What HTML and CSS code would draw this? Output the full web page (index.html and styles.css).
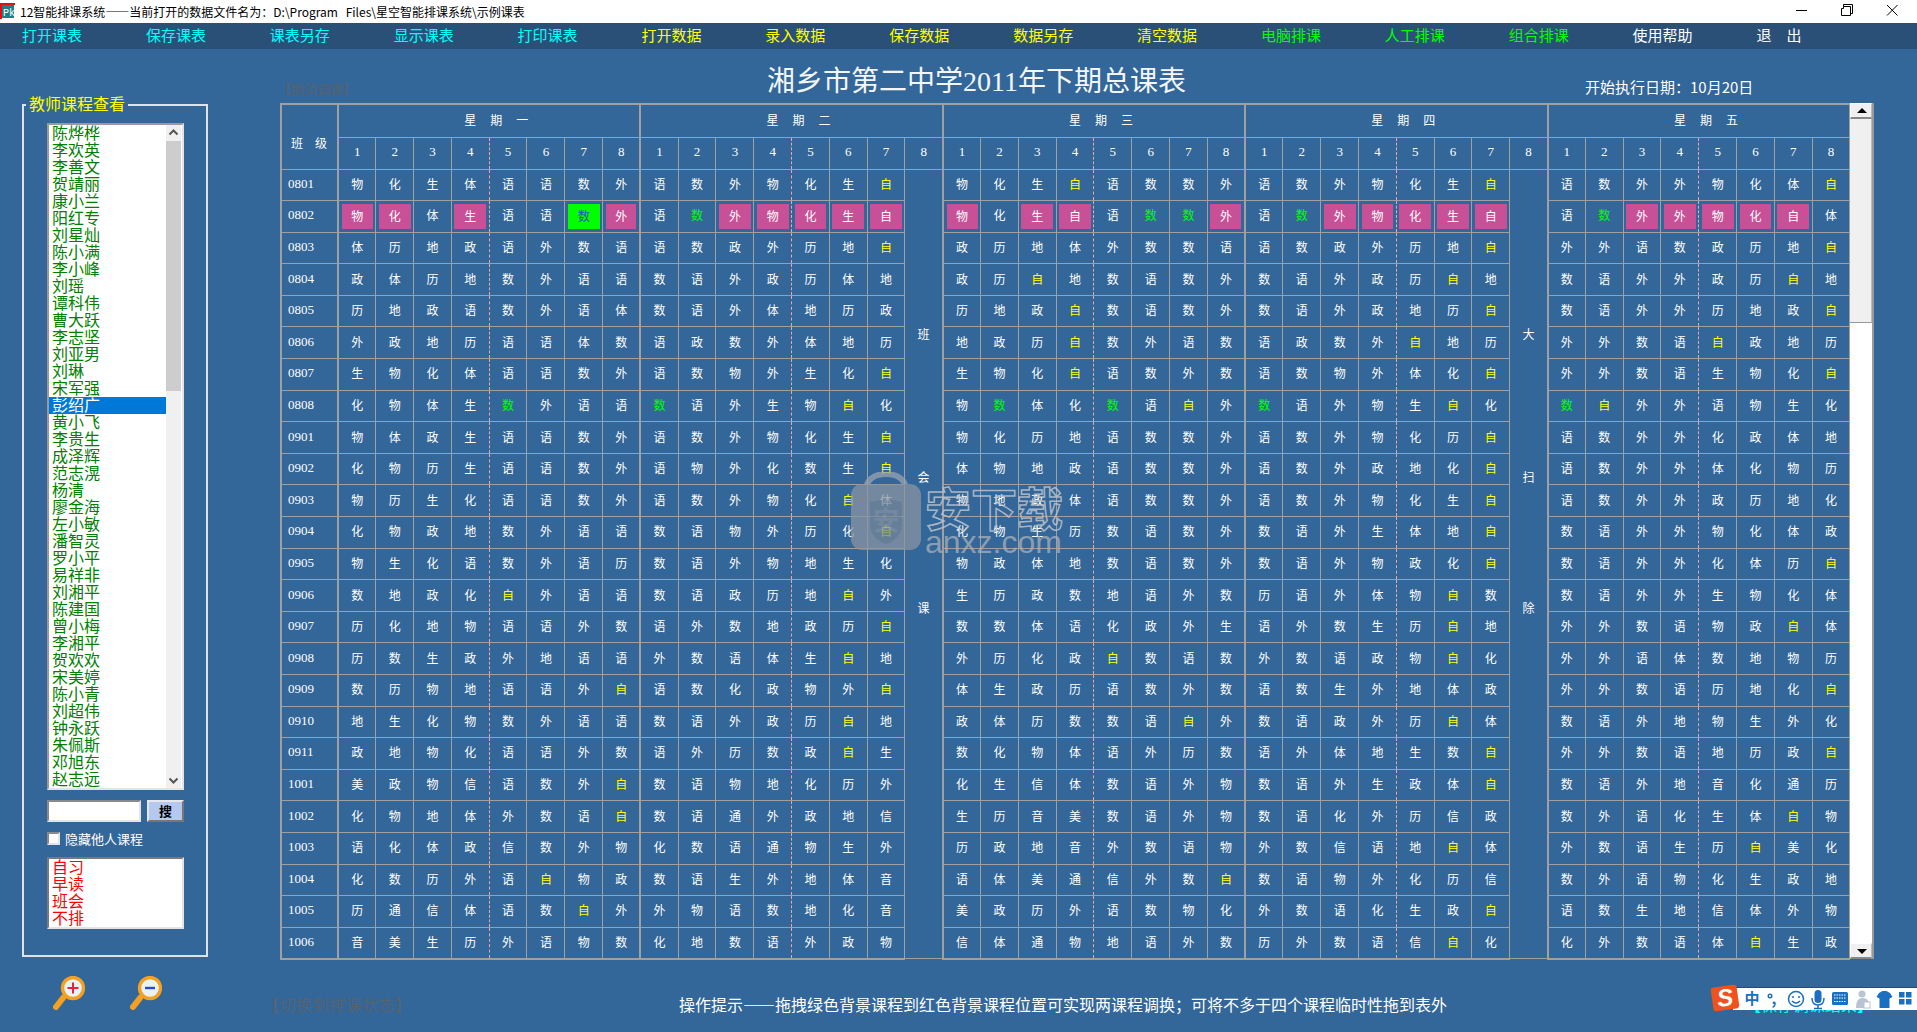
FILE: index.html
```html
<!DOCTYPE html>
<html lang="zh-CN">
<head>
<meta charset="utf-8">
<title>智能排课系统</title>
<link rel="stylesheet" href="styles.css">
</head>
<body>
<div class="app">
  <header class="titlebar">
    <svg class="appicon" viewBox="0 0 15 16" width="15" height="16"><rect x="1" y="1" width="13" height="14" fill="#1f7f86"/><path d="M0 0h15v2H2v14H0z" fill="#e01010"/><text x="3" y="13" class="appicon-text">Pk</text></svg>
    <span class="titletext">12智能排课系统——当前打开的数据文件名为：D:\Program Files\星空智能排课系统\示例课表</span>
    <div class="winbtns">
      <svg viewBox="0 0 120 12" width="120" height="12"><path d="M0 6.5h11" stroke="#000" fill="none"/><path d="M47.5 2.5h7v9h-9v-7h2zM47.5 2.5V.5h9v9h-2" stroke="#000" fill="none"/><path d="M91 1l10.5 10.5M101.5 1L91 11.5" stroke="#000" fill="none"/></svg>
    </div>
  </header>
  <nav class="menubar">
    <span class="mi cyan">打开课表</span><span class="mi cyan">保存课表</span><span class="mi cyan">课表另存</span><span class="mi cyan">显示课表</span><span class="mi cyan">打印课表</span>
    <span class="mi yellow">打开数据</span><span class="mi yellow">录入数据</span><span class="mi yellow">保存数据</span><span class="mi yellow">数据另存</span><span class="mi yellow">清空数据</span>
    <span class="mi lime">电脑排课</span><span class="mi lime">人工排课</span><span class="mi lime">组合排课</span>
    <span class="mi white">使用帮助</span><span class="mi white">退&emsp;出</span>
  </nav>
  <main class="main">
    <aside class="side">
      <section class="group">
        <div class="legend">教师课程查看</div>
        <div class="teachers">
          <ul class="tlist">
            <li>陈烨桦</li><li>李欢英</li><li>李善文</li><li>贺靖丽</li><li>康小兰</li><li>阳红专</li><li>刘星灿</li><li>陈小满</li><li>李小峰</li><li>刘瑶</li><li>谭科伟</li><li>曹大跃</li><li>李志坚</li><li>刘亚男</li><li>刘琳</li><li>宋军强</li><li class="sel">彭绍广</li><li>黄小飞</li><li>李贵生</li><li>成泽辉</li><li>范志滉</li><li>杨清</li><li>廖金海</li><li>左小敏</li><li>潘智灵</li><li>罗小平</li><li>易祥非</li><li>刘湘平</li><li>陈建国</li><li>曾小梅</li><li>李湘平</li><li>贺欢欢</li><li>宋美婷</li><li>陈小青</li><li>刘超伟</li><li>钟永跃</li><li>朱佩斯</li><li>邓旭东</li><li>赵志远</li>
          </ul>
          <div class="lscroll">
            <div class="lbtn"><svg viewBox="0 0 15 16" width="15" height="16"><path d="M3.5 9.5l4-4 4 4" fill="none" stroke="#555" stroke-width="2"/></svg></div>
            <div class="lthumb"></div>
            <div class="ltrack"></div>
            <div class="lbtn"><svg viewBox="0 0 15 16" width="15" height="16"><path d="M3.5 6.5l4 4 4-4" fill="none" stroke="#555" stroke-width="2"/></svg></div>
          </div>
        </div>
        <div class="searchrow"><input class="searchbox" type="text"><button class="searchbtn" type="button">搜</button></div>
        <label class="hiderow"><span class="check"></span><span>隐藏他人课程</span></label>
        <ul class="redlist"><li>自习</li><li>早读</li><li>班会</li><li>不排</li></ul>
      </section>
      <div class="zooms">
        <svg viewBox="0 0 32 34" width="32" height="34"><path d="M10 22L3 31" stroke="#f5a020" stroke-width="6" stroke-linecap="round"/><circle cx="20" cy="12" r="10.5" fill="#e6f3f2" stroke="#f5a020" stroke-width="3.4"/><path d="M20 6.5v11M14.5 12h11" stroke="#e8203a" stroke-width="2"/></svg>
        <svg viewBox="0 0 32 34" width="32" height="34"><path d="M10 22L3 31" stroke="#f5a020" stroke-width="6" stroke-linecap="round"/><circle cx="20" cy="12" r="10.5" fill="#e6f3f2" stroke="#f5a020" stroke-width="3.4"/><path d="M15 12h10" stroke="#3048d0" stroke-width="2.4"/></svg>
      </div>
    </aside>
    <div class="content">
      <div class="head">
        <span class="undo">【撤消调课】</span>
        <h1 class="title">湘乡市第二中学2011年下期总课表</h1>
        <span class="date">开始执行日期：10月20日</span>
      </div>
      <div class="tablewrap">
        <table class="tt">
          <colgroup>
            <col class="c0">
            <col class="c"><col class="c"><col class="c"><col class="c dash"><col class="c"><col class="c"><col class="c"><col class="c end">
            <col class="c"><col class="c"><col class="c"><col class="c dash"><col class="c"><col class="c"><col class="c"><col class="c end">
            <col class="c"><col class="c"><col class="c"><col class="c dash"><col class="c"><col class="c"><col class="c"><col class="c end">
            <col class="c"><col class="c"><col class="c"><col class="c dash"><col class="c"><col class="c"><col class="c"><col class="c end">
            <col class="c"><col class="c"><col class="c"><col class="c dash"><col class="c"><col class="c"><col class="c"><col class="c">
          </colgroup>
          <thead>
            <tr class="r-day"><th rowspan="2" class="banji">班级</th><th colspan="8" class="day">星期一</th><th colspan="8" class="day">星期二</th><th colspan="8" class="day">星期三</th><th colspan="8" class="day">星期四</th><th colspan="8" class="day">星期五</th></tr>
            <tr class="r-per"><td>1<td>2<td>3<td>4<td>5<td>6<td>7<td>8<td>1<td>2<td>3<td>4<td>5<td>6<td>7<td>8<td>1<td>2<td>3<td>4<td>5<td>6<td>7<td>8<td>1<td>2<td>3<td>4<td>5<td>6<td>7<td>8<td>1<td>2<td>3<td>4<td>5<td>6<td>7<td>8</tr>
          </thead>
          <tbody>
<tr><th>0801<td>物<td>化<td>生<td>体<td>语<td>语<td>数<td>外<td>语<td>数<td>外<td>物<td>化<td>生<td class="y">自<td rowspan="25" class="merged"><span class="m1">班</span><span class="m2">会</span><span class="m3">课</span><td>物<td>化<td>生<td class="y">自<td>语<td>数<td>数<td>外<td>语<td>数<td>外<td>物<td>化<td>生<td class="y">自<td rowspan="25" class="merged"><span class="m1">大</span><span class="m2">扫</span><span class="m3">除</span><td>语<td>数<td>外<td>外<td>物<td>化<td>体<td class="y">自</tr>
<tr><th>0802<td class="p">物<td class="p">化<td>体<td class="p">生<td>语<td>语<td class="gb">数<td class="p">外<td>语<td class="g">数<td class="p">外<td class="p">物<td class="p">化<td class="p">生<td class="p">自<td class="p">物<td>化<td class="p">生<td class="p">自<td>语<td class="g">数<td class="g">数<td class="p">外<td>语<td class="g">数<td class="p">外<td class="p">物<td class="p">化<td class="p">生<td class="p">自<td>语<td class="g">数<td class="p">外<td class="p">外<td class="p">物<td class="p">化<td class="p">自<td>体</tr>
<tr><th>0803<td>体<td>历<td>地<td>政<td>语<td>外<td>数<td>语<td>语<td>数<td>政<td>外<td>历<td>地<td class="y">自<td>政<td>历<td>地<td>体<td>外<td>数<td>数<td>语<td>语<td>数<td>政<td>外<td>历<td>地<td class="y">自<td>外<td>外<td>语<td>数<td>政<td>历<td>地<td class="y">自</tr>
<tr><th>0804<td>政<td>体<td>历<td>地<td>数<td>外<td>语<td>语<td>数<td>语<td>外<td>政<td>历<td>体<td>地<td>政<td>历<td class="y">自<td>地<td>数<td>语<td>数<td>外<td>数<td>语<td>外<td>政<td>历<td class="y">自<td>地<td>数<td>语<td>外<td>外<td>政<td>历<td class="y">自<td>地</tr>
<tr><th>0805<td>历<td>地<td>政<td>语<td>数<td>外<td>语<td>体<td>数<td>语<td>外<td>体<td>地<td>历<td>政<td>历<td>地<td>政<td class="y">自<td>数<td>语<td>数<td>外<td>数<td>语<td>外<td>政<td>地<td>历<td class="y">自<td>数<td>语<td>外<td>外<td>历<td>地<td>政<td class="y">自</tr>
<tr><th>0806<td>外<td>政<td>地<td>历<td>语<td>语<td>体<td>数<td>语<td>政<td>数<td>外<td>体<td>地<td>历<td>地<td>政<td>历<td class="y">自<td>数<td>外<td>语<td>数<td>语<td>政<td>数<td>外<td class="y">自<td>地<td>历<td>外<td>外<td>数<td>语<td class="y">自<td>政<td>地<td>历</tr>
<tr><th>0807<td>生<td>物<td>化<td>体<td>语<td>语<td>数<td>外<td>语<td>数<td>物<td>外<td>生<td>化<td class="y">自<td>生<td>物<td>化<td class="y">自<td>语<td>数<td>外<td>数<td>语<td>数<td>物<td>外<td>体<td>化<td class="y">自<td>外<td>外<td>数<td>语<td>生<td>物<td>化<td class="y">自</tr>
<tr><th>0808<td>化<td>物<td>体<td>生<td class="g">数<td>外<td>语<td>语<td class="g">数<td>语<td>外<td>生<td>物<td class="y">自<td>化<td>物<td class="g">数<td>体<td>化<td class="g">数<td>语<td class="y">自<td>外<td class="g">数<td>语<td>外<td>物<td>生<td class="y">自<td>化<td class="g">数<td class="y">自<td>外<td>外<td>语<td>物<td>生<td>化</tr>
<tr><th>0901<td>物<td>体<td>政<td>生<td>语<td>语<td>数<td>外<td>语<td>数<td>外<td>物<td>化<td>生<td class="y">自<td>物<td>化<td>历<td>地<td>语<td>数<td>数<td>外<td>语<td>数<td>外<td>物<td>化<td>历<td class="y">自<td>语<td>数<td>外<td>外<td>化<td>政<td>体<td>地</tr>
<tr><th>0902<td>化<td>物<td>历<td>生<td>语<td>语<td>数<td>外<td>语<td>物<td>外<td>化<td>数<td>生<td class="y">自<td>体<td>物<td>地<td>政<td>语<td>数<td>数<td>外<td>语<td>数<td>外<td>政<td>地<td>化<td class="y">自<td>语<td>数<td>外<td>外<td>体<td>化<td>物<td>历</tr>
<tr><th>0903<td>物<td>历<td>生<td>化<td>语<td>语<td>数<td>外<td>语<td>数<td>外<td>物<td>化<td class="y">自<td>体<td>物<td>地<td>政<td>体<td>语<td>数<td>数<td>外<td>语<td>数<td>外<td>物<td>化<td>生<td class="y">自<td>语<td>数<td>外<td>外<td>政<td>历<td>地<td>化</tr>
<tr><th>0904<td>化<td>物<td>政<td>地<td>数<td>外<td>语<td>语<td>数<td>语<td>物<td>外<td>历<td>化<td class="y">自<td>化<td>物<td>生<td>历<td>数<td>语<td>数<td>外<td>数<td>语<td>外<td>生<td>体<td>地<td class="y">自<td>数<td>语<td>外<td>外<td>物<td>化<td>体<td>政</tr>
<tr><th>0905<td>物<td>生<td>化<td>语<td>数<td>外<td>语<td>历<td>数<td>语<td>外<td>物<td>地<td>生<td>化<td>物<td>政<td>体<td>地<td>数<td>语<td>数<td>外<td>数<td>语<td>外<td>物<td>政<td>化<td class="y">自<td>数<td>语<td>外<td>外<td>化<td>体<td>历<td class="y">自</tr>
<tr><th>0906<td>数<td>地<td>政<td>化<td class="y">自<td>外<td>语<td>语<td>数<td>语<td>政<td>历<td>地<td class="y">自<td>外<td>生<td>历<td>政<td>数<td>地<td>语<td>外<td>数<td>历<td>语<td>外<td>体<td>物<td class="y">自<td>数<td>数<td>语<td>外<td>外<td>生<td>物<td>化<td>体</tr>
<tr><th>0907<td>历<td>化<td>地<td>物<td>语<td>语<td>外<td>数<td>语<td>外<td>数<td>地<td>政<td>历<td class="y">自<td>数<td>数<td>体<td>语<td>化<td>政<td>外<td>生<td>语<td>外<td>数<td>生<td>历<td class="y">自<td>地<td>外<td>外<td>数<td>语<td>物<td>政<td class="y">自<td>体</tr>
<tr><th>0908<td>历<td>数<td>生<td>政<td>外<td>地<td>语<td>语<td>外<td>数<td>语<td>体<td>生<td class="y">自<td>地<td>外<td>历<td>化<td>政<td class="y">自<td>数<td>语<td>数<td>外<td>数<td>语<td>政<td>物<td class="y">自<td>化<td>外<td>外<td>语<td>体<td>数<td>地<td>物<td>历</tr>
<tr><th>0909<td>数<td>历<td>物<td>地<td>语<td>语<td>外<td class="y">自<td>语<td>数<td>化<td>政<td>物<td>外<td class="y">自<td>体<td>生<td>政<td>历<td>语<td>数<td>外<td>数<td>语<td>数<td>生<td>外<td>地<td>体<td>政<td>外<td>外<td>数<td>语<td>历<td>地<td>化<td class="y">自</tr>
<tr><th>0910<td>地<td>生<td>化<td>物<td>数<td>外<td>语<td>语<td>数<td>语<td>外<td>政<td>历<td class="y">自<td>地<td>政<td>体<td>历<td>数<td>数<td>语<td class="y">自<td>外<td>数<td>语<td>政<td>外<td>历<td class="y">自<td>体<td>数<td>语<td>外<td>地<td>物<td>生<td>外<td>化</tr>
<tr><th>0911<td>政<td>地<td>物<td>化<td>语<td>语<td>外<td>数<td>语<td>外<td>历<td>数<td>政<td class="y">自<td>生<td>数<td>化<td>物<td>体<td>语<td>外<td>历<td>数<td>语<td>外<td>体<td>地<td>生<td>数<td class="y">自<td>外<td>外<td>数<td>语<td>地<td>历<td>政<td class="y">自</tr>
<tr><th>1001<td>美<td>政<td>物<td>信<td>语<td>数<td>外<td class="y">自<td>数<td>语<td>物<td>地<td>化<td>历<td>外<td>化<td>生<td>信<td>体<td>数<td>语<td>外<td>物<td>数<td>语<td>外<td>生<td>政<td>体<td class="y">自<td>数<td>语<td>外<td>地<td>音<td>化<td>通<td>历</tr>
<tr><th>1002<td>化<td>物<td>地<td>体<td>外<td>数<td>语<td class="y">自<td>数<td>语<td>通<td>外<td>政<td>地<td>信<td>生<td>历<td>音<td>美<td>数<td>语<td>外<td>物<td>数<td>语<td>化<td>外<td>历<td>信<td>政<td>数<td>外<td>语<td>化<td>生<td>体<td class="y">自<td>物</tr>
<tr><th>1003<td>语<td>化<td>体<td>政<td>信<td>数<td>外<td>物<td>化<td>数<td>语<td>通<td>物<td>生<td>外<td>历<td>政<td>地<td>音<td>外<td>数<td>语<td>物<td>外<td>数<td>信<td>语<td>地<td class="y">自<td>体<td>外<td>数<td>语<td>生<td>历<td class="y">自<td>美<td>化</tr>
<tr><th>1004<td>化<td>数<td>历<td>外<td>语<td class="y">自<td>物<td>政<td>数<td>语<td>生<td>外<td>地<td>体<td>音<td>语<td>体<td>美<td>通<td>信<td>外<td>数<td class="y">自<td>数<td>语<td>物<td>外<td>化<td>历<td>信<td>数<td>外<td>语<td>物<td>化<td>生<td>政<td>地</tr>
<tr><th>1005<td>历<td>通<td>信<td>体<td>语<td>数<td class="y">自<td>外<td>外<td>物<td>语<td>数<td>地<td>化<td>音<td>美<td>政<td>历<td>外<td>语<td>数<td>物<td>化<td>外<td>数<td>语<td>化<td>生<td>政<td class="y">自<td>语<td>数<td>生<td>地<td>信<td>体<td>外<td>物</tr>
<tr><th>1006<td>音<td>美<td>生<td>历<td>外<td>语<td>物<td>数<td>化<td>地<td>数<td>语<td>外<td>政<td>物<td>信<td>体<td>通<td>物<td>地<td>语<td>外<td>数<td>历<td>外<td>数<td>语<td>信<td class="y">自<td>化<td>化<td>外<td>数<td>语<td>体<td class="y">自<td>生<td>政</tr>
          </tbody>
        </table>
        <div class="vscroll">
          <div class="vbtn"><svg viewBox="0 0 22 14" width="22" height="14"><path d="M11 4l-5 5h10z"/></svg></div>
          <div class="vthumb"></div>
          <div class="vtrack"></div>
          <div class="vbtn"><svg viewBox="0 0 22 14" width="22" height="14"><path d="M6 5h10l-5 5z"/></svg></div>
        </div>
      </div>
      <div class="foot">
        <span class="switch">【切换到排课状态】</span>
        <span class="hint">操作提示——拖拽绿色背景课程到红色背景课程位置可实现两课程调换；可将不多于四个课程临时性拖到表外</span>
        <span class="save">【保存调课结果】</span>
      </div>
    </div>
  </main>

  <div class="watermark">
    <svg class="wm-lock" viewBox="0 0 72 80" width="72" height="80">
      <path d="M16 16C18 5 28 2 36 2s18 3 20 14" fill="none" stroke="#9aa3ad" stroke-width="6"/>
      <rect x="1" y="12" width="70" height="66" rx="11" fill="#8a95a2"/>
      <path d="M20 30q16-5 32 0v22q0 14-16 20-16-6-16-20z" fill="#78889a"/>
      <text x="36" y="58" class="wm-an">安</text>
    </svg>
    <div class="wm-text"><div class="wm-cn">安下载</div><div class="wm-en">anxz.com</div></div>
  </div>

  <svg class="sogou" viewBox="0 0 206 30" width="206" height="30">
    <rect x="22" y="5" width="184" height="22" fill="#fff"/>
    <path d="M22 4.5h184" stroke="#2a4a70"/>
    <g transform="rotate(-8 14 15)"><rect x="1" y="3" width="26" height="24" rx="3" fill="#f0521d"/><text x="14" y="23" class="sg-s">S</text></g>
    <text x="41" y="21" class="sg-zh">中</text>
    <circle cx="59" cy="13" r="1.8" fill="none" stroke="#1a6fc0" stroke-width="1.4"/>
    <text x="63" y="21" class="sg-zh">,</text>
    <circle cx="85" cy="16" r="7.5" fill="none" stroke="#1a6fc0" stroke-width="1.5"/>
    <path d="M82 13v2M88 13v2" stroke="#1a6fc0" stroke-width="1.5"/><path d="M81 18q4 4 8 0" fill="none" stroke="#1a6fc0" stroke-width="1.5"/>
    <rect x="103.500" y="7" width="7" height="13" rx="3.500" fill="#1a6fc0"/>
    <path d="M101 15q0 7 6 7t6-7M107 22v3M103 25.500h8" fill="none" stroke="#1a6fc0" stroke-width="1.500"/>
    <rect x="121" y="9" width="16" height="13" rx="1.500" fill="#1a6fc0"/>
    <path d="M123 12h12M123 15h12M123 18.500h12" stroke="#fff" stroke-dasharray="1.500 1"/>
    <circle cx="151" cy="11" r="3.500" fill="#b8c4d4"/><path d="M145 25q0-10 6-10t7 5v5z" fill="#b8c4d4"/><rect x="153" y="19" width="6" height="6" fill="#fff" stroke="#b8c4d4"/>
    <path d="M168 10l3.500-2h4l3.500 2 2.500 4-3 1.500v9.500h-10v-9.500l-3-1.500z" fill="#1a6fc0"/>
    <path d="M188 9h5.500v5.500H188zM195 9h5.500v5.500H195zM188 16h5.500v5.500H188zM195 16h5.500v5.500H195z" fill="#1a6fc0"/>
  </svg>
</div>
</body>
</html>
```
FILE: styles.css
```css
* { box-sizing: border-box; }
html, body { margin: 0; padding: 0; }
body { font-family: "Noto Sans CJK SC", "Liberation Sans", sans-serif; color: #fff; }
ul { list-style: none; margin: 0; padding: 0; }

.app { position: relative; width: 1917px; height: 1032px; overflow: hidden; background: #336699; display: flex; flex-direction: column; }

.titlebar { height: 23px; background: #fff; display: flex; align-items: center; color: #000; font-size: 12px; line-height: 23px; flex: none; }
.appicon { flex: none; margin-top: -2px; }
.appicon-text { font: 10px "Liberation Mono", monospace; fill: #fff; }
.titletext { margin-left: 5px; white-space: nowrap; word-spacing: 5px; }
.winbtns { margin-left: auto; margin-right: 1px; display: flex; margin-top: -3px; }

.menubar { height: 26px; background: #2a5078; display: flex; padding-left: 22px; flex: none; }
.mi { width: 123.9px; flex: none; font-size: 15px; line-height: 24px; white-space: nowrap; }
.cyan { color: #00ffff; }
.yellow { color: #ffff00; }
.lime { color: #00ff00; }
.white { color: #fff; }

.main { flex: 1; display: flex; min-height: 0; }
.side { width: 269px; flex: none; padding: 55px 0 0 22px; }
.group { position: relative; width: 186px; height: 853px; border: 2px solid #dfe3e8; padding: 17px 0 0 23px; }
.legend { position: absolute; left: 2px; top: -13px; padding: 0 3px; background: #336699; color: #ffff00; font-size: 16px; line-height: 20px; white-space: nowrap; }

.teachers { width: 137px; height: 667px; background: #fff; display: flex; border-style: solid; border-width: 2px; border-color: #9a9a9a #e4e4e4 #e4e4e4 #9a9a9a; }
.tlist { width: 117px; flex: none; }
.tlist li { height: 17px; line-height: 15px; font-size: 16px; color: #008000; padding-left: 3px; white-space: nowrap; }
.tlist li.sel { background: #0078d7; color: #fff; }
.lscroll { width: 15px; flex: none; display: flex; flex-direction: column; background: #f0f0f0; }
.lbtn { height: 16px; flex: none; }
.lbtn svg { display: block; }
.lthumb { height: 250px; flex: none; background: #cdcdcd; }
.ltrack { flex: 1; }

.searchrow { display: flex; gap: 6px; margin-top: 10px; }
.searchbox { width: 94px; height: 22px; background: #fff; padding: 0; border-style: solid; border-width: 2px; border-color: #8a8a8a #e4e4e4 #e4e4e4 #8a8a8a; }
.searchbtn { width: 37px; height: 22px; padding: 0; background: #b4c8f0; color: #000; font: 700 13px/18px "Noto Sans CJK SC", sans-serif; border-style: solid; border-width: 2px; border-color: #e8e8e8 #777 #777 #e8e8e8; }
.hiderow { display: flex; align-items: center; gap: 5px; height: 13px; margin-top: 10px; font-size: 13px; line-height: 11px; white-space: nowrap; }
.check { width: 13px; height: 13px; flex: none; background: #fff; border-style: solid; border-width: 2px; border-color: #8a8a8a #e4e4e4 #e4e4e4 #8a8a8a; }
.redlist { width: 137px; height: 72px; margin-top: 12px; background: #fff; border-style: solid; border-width: 2px; border-color: #7a7a7a #e4e4e4 #e4e4e4 #7a7a7a; padding-left: 3px; }
.redlist li { height: 17px; line-height: 15px; font-size: 16px; color: #ff0000; }

.zooms { display: flex; gap: 45px; margin: 19px 0 0 31px; }
.zooms svg { display: block; flex: none; }

.content { flex: 1; min-width: 0; display: flex; flex-direction: column; }
.head { height: 54px; flex: none; display: flex; padding-left: 9px; }
.undo { width: 489px; flex: none; margin-top: 32px; font-size: 13px; line-height: 16px; color: #566370; }
.title { width: 818px; flex: none; margin: 17px 0 0; font: 400 28px/32px "Liberation Serif", "Noto Sans CJK SC", serif; color: #f2f6fa; white-space: nowrap; }
.date { margin-top: 29px; font-size: 15px; line-height: 18px; white-space: nowrap; }

.tablewrap { display: flex; height: 856px; flex: none; margin-left: 11px; }
.tt { width: 1569px; height: 855px; flex: none; table-layout: fixed; border-collapse: collapse; font-size: 12px; color: #fff; text-align: center; }
.c0 { width: 57px; border-left: 2px solid #a0a0a0; border-right: 2px solid #a0a0a0; }
.c { width: 37.8px; border-right: 1px solid #a0a0a0; }
.c.dash { border-right: 1px dashed #e8a8a8; }
.c.end { border-right: 2px solid #a0a0a0; }
.tt th, .tt td { padding: 0 0 2px; font-weight: 400; line-height: 14px; border-bottom: 1px solid #a0a0a0; }
.r-day th { border-top: 2px solid #a0a0a0; height: 33px; }
.r-per td { height: 32px; font: 13px/14px "Liberation Serif", serif; }
.tt tbody tr { height: 31.6px; }
.tt tbody tr:last-child > * { border-bottom: 2px solid #a0a0a0; }
.tt tbody th { text-align: left; padding-left: 6px; font: 13px/14px "Liberation Serif", serif; }
.banji { text-align: left; padding: 12px 0 0 9px !important; letter-spacing: 12px; white-space: nowrap; }
.day { letter-spacing: 14px; padding-left: 28px !important; white-space: nowrap; }

.y { color: #ffff00; }
.g { color: #00ff00; }
.p, .gb { padding: 3px !important; background-clip: content-box; }
.p { background-color: #c85096; }
.gb { background-color: #00ff00; color: #2e50c8; }

.tt .merged { vertical-align: top; text-align: center; }
.merged span { display: block; line-height: 16px; }
.m1 { margin-top: 156px; }
.m2 { margin-top: 127px; }
.m3 { margin-top: 115px; }

.vscroll { width: 24px; flex: none; display: flex; flex-direction: column; background: #fff; border-right: 2px solid #9a9a9a; }
.vbtn { height: 16px; flex: none; background: #f0f0f0; border-style: solid; border-width: 1px 1px 2px; border-color: #fff #bbb #888 #fff; }
.vbtn svg { display: block; }
.vthumb { height: 204px; flex: none; background: #f0f0f0; border-bottom: 1px solid #999; border-right: 1px solid #bbb; }
.vtrack { flex: 1; }

.foot { flex: none; display: flex; padding-top: 35px; font-size: 16px; line-height: 20px; white-space: nowrap; }
.switch { margin-left: -6px; letter-spacing: .5px; color: #566370; }
.hint { margin-left: 267.5px; }
.save { margin-left: 298px; color: #00ffff; }

.watermark { position: absolute; left: 850px; top: 472px; display: flex; gap: 3px; pointer-events: none; }
.wm-lock { display: block; opacity: .75; flex: none; }
.wm-an { font: 700 26px "Noto Sans CJK SC", sans-serif; fill: #8a95a2; text-anchor: middle; }
.wm-text { padding-top: 12px; }
.wm-cn { font-size: 46px; line-height: 44px; font-weight: 700; color: transparent; -webkit-text-stroke: 1.5px rgba(190,196,204,.85); white-space: nowrap; }
.wm-en { font: 32px/28px "Liberation Sans", sans-serif; color: rgba(170,176,184,.75); white-space: nowrap; }

.sogou { position: absolute; left: 1711px; top: 983px; display: block; }
.sg-s { font: italic 700 24px "Liberation Sans", sans-serif; fill: #fff; text-anchor: middle; }
.sg-zh { font: 700 15px "Noto Sans CJK SC", sans-serif; fill: #1a6fc0; text-anchor: middle; }
```
